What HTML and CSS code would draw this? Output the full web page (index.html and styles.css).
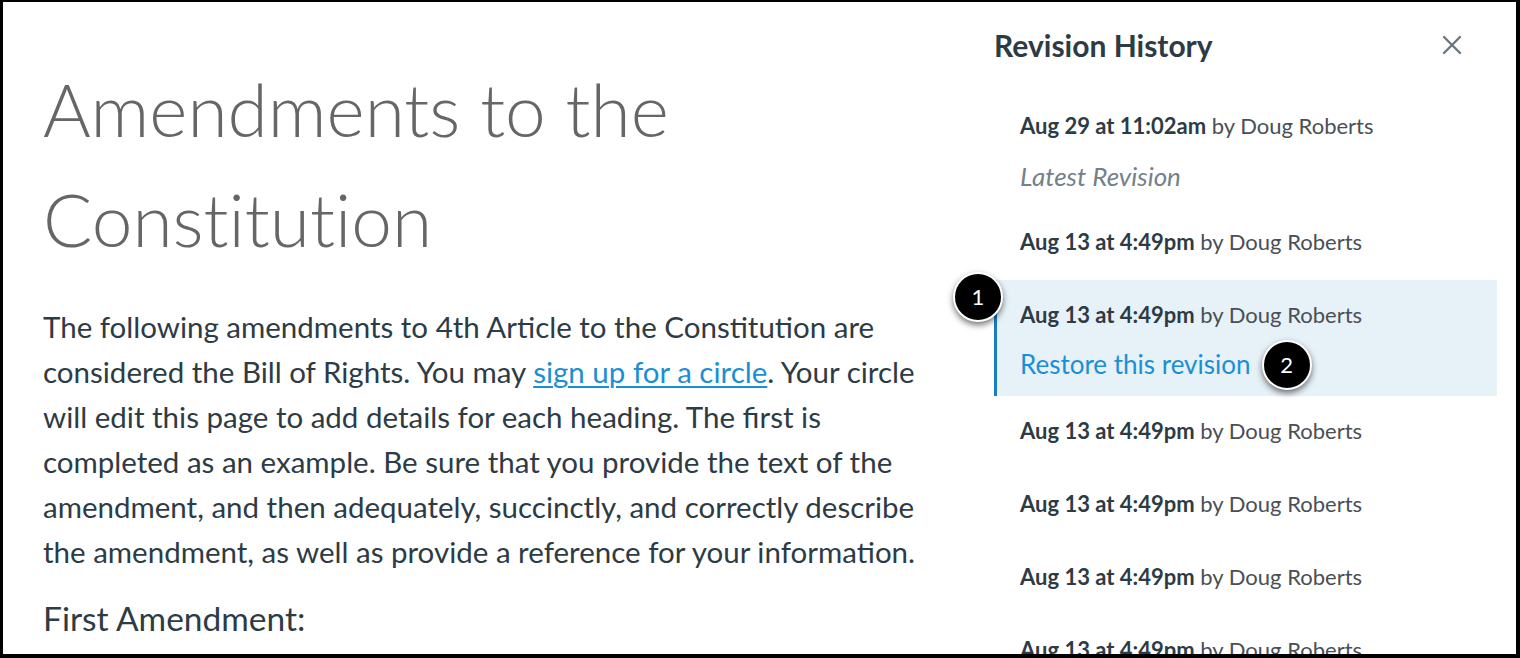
FILE: index.html
```html
<!DOCTYPE html>
<html lang="en">
<head>
<meta charset="utf-8">
<title>Amendments to the Constitution</title>
<link rel="stylesheet" href="styles.css">
</head>
<body>
<div class="frame">
  <main class="page">
    <h1 class="title">Amendments to the Constitution</h1>
    <p class="intro">The following amendments to 4th Article to the Constitution are considered the Bill of Rights. You may <a href="#" class="link">sign up for a circle</a>. Your circle will edit this page to add details for each heading. The first is completed as an example. Be sure that you provide the text of the amendment, and then adequately, succinctly, and correctly describe the amendment, as well as provide a reference for your information.</p>
    <h2 class="subhead">First Amendment:</h2>
  </main>
  <aside class="panel">
    <div class="panel-head">
      <h2 class="panel-title">Revision History</h2>
      <button class="close" aria-label="Close">
        <svg width="20" height="20" viewBox="0 0 20 20"><path d="M2 2 L18 18 M18 2 L2 18" stroke="#6b7780" stroke-width="2.4" stroke-linecap="round" fill="none"/></svg>
      </button>
    </div>
    <ul class="revisions">
      <li class="rev rev-latest">
        <div class="rev-line"><strong>Aug 29 at 11:02am</strong> by Doug Roberts</div>
        <div class="rev-note">Latest Revision</div>
      </li>
      <li class="rev">
        <div class="rev-line"><strong>Aug 13 at 4:49pm</strong> by Doug Roberts</div>
      </li>
      <li class="rev rev-selected">
        <span class="badge badge-1">1</span>
        <div class="rev-line"><strong>Aug 13 at 4:49pm</strong> by Doug Roberts</div>
        <div class="rev-action"><a href="#" class="restore">Restore this revision</a><span class="badge badge-2">2</span></div>
      </li>
      <li class="rev">
        <div class="rev-line"><strong>Aug 13 at 4:49pm</strong> by Doug Roberts</div>
      </li>
      <li class="rev">
        <div class="rev-line"><strong>Aug 13 at 4:49pm</strong> by Doug Roberts</div>
      </li>
      <li class="rev">
        <div class="rev-line"><strong>Aug 13 at 4:49pm</strong> by Doug Roberts</div>
      </li>
      <li class="rev">
        <div class="rev-line"><strong>Aug 13 at 4:49pm</strong> by Doug Roberts</div>
      </li>
    </ul>
  </aside>
</div>
</body>
</html>
```

FILE: styles.css
```css
* { box-sizing: border-box; }
html, body { margin: 0; padding: 0; background: #000; }
body { font-family: Lato, "Open Sans", sans-serif; color: #2d3b45; }

.frame {
  width: 1520px;
  height: 658px;
  background: #fff;
  border-style: solid;
  border-color: #000;
  border-width: 2px 4px 4px 3px;
  display: flex;
  overflow: hidden;
}

.page {
  flex: 1;
  padding: 52px 0 0 40px;
}

.title {
  margin: 0;
  font-weight: 300;
  font-size: 73px;
  line-height: 110px;
  color: #666;
  width: 700px;
  font-variant-ligatures: no-common-ligatures;
}

.intro {
  margin: 30px 0 0;
  font-size: 29.5px;
  line-height: 45px;
  color: #2d3b45;
  width: 892px;
}

.link {
  color: #1b8fd4;
  text-decoration: underline;
  text-underline-offset: 3px;
  text-decoration-thickness: 1.5px;
}

.subhead {
  margin: 24px 0 0;
  font-weight: 400;
  font-size: 33.5px;
  line-height: 40px;
  color: #2d3b45;
}

.panel {
  width: 503px;
  margin-right: 19px;
  flex: none;
}

.panel-head {
  display: flex;
  justify-content: space-between;
  align-items: center;
  padding-top: 25px;
}

.panel-title {
  margin: 0;
  font-size: 30px;
  line-height: 36px;
  font-weight: 700;
  color: #2d3b45;
}

.close {
  border: 0;
  background: none;
  padding: 0;
  margin-right: 35px;
  width: 20px;
  height: 20px;
  display: flex;
}

.revisions {
  list-style: none;
  margin: 28px 0 0;
  padding: 0;
}

.rev {
  position: relative;
  padding: 22px 0 25px 26px;
  font-size: 22px;
  line-height: 26px;
  color: #4a4f55;
}

.rev-latest { padding-bottom: 16px; }

.rev-line strong { font-weight: 700; color: #2d3b45; }

.rev-note {
  margin-top: 22px;
  font-size: 26px;
  line-height: 30px;
  font-style: italic;
  color: #73818c;
}

.rev-selected {
  background: #e6f1f8;
  padding: 22px 0 17px 23px;
  border-left: 3px solid #1a7dc4;
}

.rev-action {
  margin-top: 21px;
  display: flex;
  align-items: center;
  height: 30px;
  font-size: 26px;
  line-height: 30px;
}

.restore { color: #1b8fd4; text-decoration: none; }

.badge {
  flex: none;
  width: 50px;
  height: 50px;
  border-radius: 50%;
  background: #000;
  border: 2px solid #fff;
  box-shadow: 0 3px 6px rgba(0,0,0,0.55);
  color: #fff;
  font-size: 22px;
  line-height: 1;
  font-weight: 400;
  display: flex;
  align-items: center;
  justify-content: center;
}

.badge-1 {
  position: absolute;
  left: -44px;
  top: -8px;
}

.badge-2 {
  position: relative;
  margin-left: 11px;
  top: 1px;
}
```
